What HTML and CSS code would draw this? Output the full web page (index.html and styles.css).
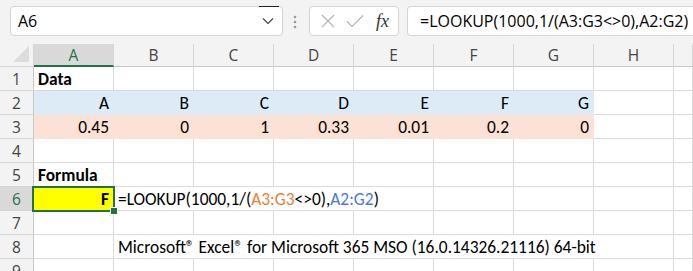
FILE: index.html
```html
<!DOCTYPE html>
<html lang="en">
<head>
    <meta charset="UTF-8">
    <title>Excel - LOOKUP last non-zero</title>
    <link rel="stylesheet" href="styles.css">
</head>
<body>
    <div class="toolbar">
        <div class="namebox">
            <span>A6</span>
            <svg class="chevron" width="12" height="8" viewBox="0 0 12 8"><path d="M1 1.5 L6 6.5 L11 1.5" fill="none" stroke="#444" stroke-width="1.2"/></svg>
        </div>
        <svg class="grip" width="4" height="14" viewBox="0 0 4 14"><circle cx="2" cy="2" r="1.3" fill="#9a9a9a"/><circle cx="2" cy="7" r="1.3" fill="#9a9a9a"/><circle cx="2" cy="12" r="1.3" fill="#9a9a9a"/></svg>
        <div class="fxbox">
            <svg width="16" height="16" viewBox="0 0 16 16"><path d="M2 2 L14 14 M14 2 L2 14" stroke="#b4b4b4" stroke-width="1.2"/></svg>
            <svg width="18" height="16" viewBox="0 0 18 16"><path d="M1 8.5 L6 13.5 L17 2.5" fill="none" stroke="#b4b4b4" stroke-width="1.2"/></svg>
            <span class="fx">fx</span>
        </div>
        <div class="formula">=LOOKUP(1000,1/(A3:G3&lt;&gt;0),A2:G2)</div>
    </div>

    <div class="sheet">
        <!-- column headers -->
        <div class="hd corner"></div>
        <div class="hd col sel">A</div>
        <div class="hd col">B</div>
        <div class="hd col">C</div>
        <div class="hd col">D</div>
        <div class="hd col">E</div>
        <div class="hd col">F</div>
        <div class="hd col">G</div>
        <div class="hd col">H</div>
        <div class="hd col"></div>

        <!-- row 1 -->
        <div class="hd row">1</div>
        <div class="c b">Data</div>
        <div class="c"></div><div class="c"></div><div class="c"></div><div class="c"></div><div class="c"></div><div class="c"></div><div class="c"></div><div class="c"></div>

        <!-- row 2 -->
        <div class="hd row">2</div>
        <div class="c r blue">A</div>
        <div class="c r blue">B</div>
        <div class="c r blue">C</div>
        <div class="c r blue">D</div>
        <div class="c r blue">E</div>
        <div class="c r blue">F</div>
        <div class="c r blue">G</div>
        <div class="c"></div><div class="c"></div>

        <!-- row 3 -->
        <div class="hd row">3</div>
        <div class="c r peach">0.45</div>
        <div class="c r peach">0</div>
        <div class="c r peach">1</div>
        <div class="c r peach">0.33</div>
        <div class="c r peach">0.01</div>
        <div class="c r peach">0.2</div>
        <div class="c r peach">0</div>
        <div class="c"></div><div class="c"></div>

        <!-- row 4 -->
        <div class="hd row">4</div>
        <div class="c"></div><div class="c"></div><div class="c"></div><div class="c"></div><div class="c"></div><div class="c"></div><div class="c"></div><div class="c"></div><div class="c"></div>

        <!-- row 5 -->
        <div class="hd row">5</div>
        <div class="c b">Formula</div>
        <div class="c"></div><div class="c"></div><div class="c"></div><div class="c"></div><div class="c"></div><div class="c"></div><div class="c"></div><div class="c"></div>

        <!-- row 6 -->
        <div class="hd row sel">6</div>
        <div class="c r b yellow active">F</div>
        <div class="c span4">=LOOKUP(1000,1/(<span class="ref1">A3:G3</span>&lt;&gt;0),<span class="ref2">A2:G2</span>)</div>
        <div class="c"></div><div class="c"></div><div class="c"></div><div class="c"></div>

        <!-- row 7 -->
        <div class="hd row">7</div>
        <div class="c"></div><div class="c"></div><div class="c"></div><div class="c"></div><div class="c"></div><div class="c"></div><div class="c"></div><div class="c"></div><div class="c"></div>

        <!-- row 8 -->
        <div class="hd row">8</div>
        <div class="c"></div>
        <div class="c span7">Microsoft® Excel® for Microsoft 365 MSO (16.0.14326.21116) 64-bit</div>
        <div class="c"></div>

        <!-- row 9 -->
        <div class="hd row">9</div>
        <div class="c"></div><div class="c"></div><div class="c"></div><div class="c"></div><div class="c"></div><div class="c"></div><div class="c"></div><div class="c"></div><div class="c"></div>
    </div>
</body>
</html>
```

FILE: styles.css
```css
body {
    margin: 0;
    width: 693px;
    height: 271px;
    overflow: hidden;
    background: #fff;
}
.toolbar {
    height: 44px;
    box-sizing: border-box;
    padding: 6px 0 0 10px;
    background: #f3f3f3;
    display: flex;
    align-items: flex-start;
    font-family: "Open Sans", "Noto Sans", sans-serif;
    font-size: 16px;
    color: #000;
}
.namebox {
    width: 273px;
    height: 30px;
    box-sizing: border-box;
    border: 1px solid #d4d4d4;
    border-radius: 4px;
    background: #fff;
    display: flex;
    align-items: center;
    justify-content: space-between;
    padding: 0 8px 0 7px;
    position: relative;
}
.namebox::after {
    content: "";
    position: absolute;
    top: -1px;
    right: 3px;
    width: 20px;
    height: 1px;
    background: #222;
}
.grip {
    margin: 9px 0 0 10px;
}
.fxbox {
    margin-left: 12px;
    width: 90px;
    height: 30px;
    box-sizing: border-box;
    border: 1px solid #d4d4d4;
    border-radius: 4px;
    background: #fff;
    display: flex;
    align-items: center;
    gap: 10px;
    padding-left: 10px;
}
.fx {
    font-family: "Liberation Serif", "DejaVu Serif", serif;
    font-style: italic;
    font-size: 18px;
    color: #333;
    margin-left: 2px;
}
.formula {
    margin-left: 8px;
    flex: 1;
    height: 30px;
    box-sizing: border-box;
    border: 1px solid #d4d4d4;
    border-right: none;
    border-radius: 4px 0 0 4px;
    background: #fff;
    display: flex;
    align-items: center;
    padding-left: 12px;
    white-space: nowrap;
}
.sheet {
    display: grid;
    grid-template-columns: 34px repeat(8, 80px) 1fr;
    grid-template-rows: 23px;
    grid-auto-rows: 24px;
    font-family: Calibri, Carlito, Lato, sans-serif;
    font-size: 17.4px;
}
.hd {
    background: #f3f3f3;
    font-family: "Open Sans", "Noto Sans", sans-serif;
    font-size: 15.5px;
    color: #444;
    display: flex;
    align-items: center;
    justify-content: center;
    box-sizing: border-box;
    border-right: 1px solid #d6d6d6;
    border-bottom: 1px solid #d6d6d6;
}
.hd.col {
    border-bottom-color: #c8c8c8;
}
.hd.row {
    border-right-color: #c8c8c8;
}
.hd.sel {
    background: #d9d9d9;
    color: #217346;
}
.hd.col.sel {
    border-bottom: 2px solid #217346;
}
.corner {
    position: relative;
}
.corner::after {
    content: "";
    position: absolute;
    right: 4px;
    bottom: 4px;
    border-left: 16px solid transparent;
    border-bottom: 16px solid #dcdcdc;
}
.c {
    box-sizing: border-box;
    border-right: 1px solid #dadada;
    border-bottom: 1px solid #dadada;
    display: flex;
    align-items: flex-end;
    padding: 0 4px 1px 4px;
    line-height: 20px;
    white-space: nowrap;
    color: #000;
}
.c.r {
    justify-content: flex-end;
}
.c.b {
    font-weight: bold;
}
.blue {
    background: #ddebf7;
    border-color: #ddebf7;
}
.peach {
    background: #fbe2d5;
    border-color: #fbe2d5;
}
.yellow {
    background: #ffff00;
}
.active {
    position: relative;
}
.active::before {
    content: "";
    position: absolute;
    left: -2px;
    top: -1px;
    right: -2px;
    bottom: -2px;
    border: 2px solid #217346;
}
.active::after {
    content: "";
    position: absolute;
    right: -5px;
    bottom: -5px;
    width: 6px;
    height: 6px;
    background: #217346;
    border: 1px solid #fff;
}
.span4 {
    grid-column: span 4;
}
.span7 {
    grid-column: span 7;
}
.ref1 {
    color: #e8803a;
}
.ref2 {
    color: #4a78d4;
}
```
